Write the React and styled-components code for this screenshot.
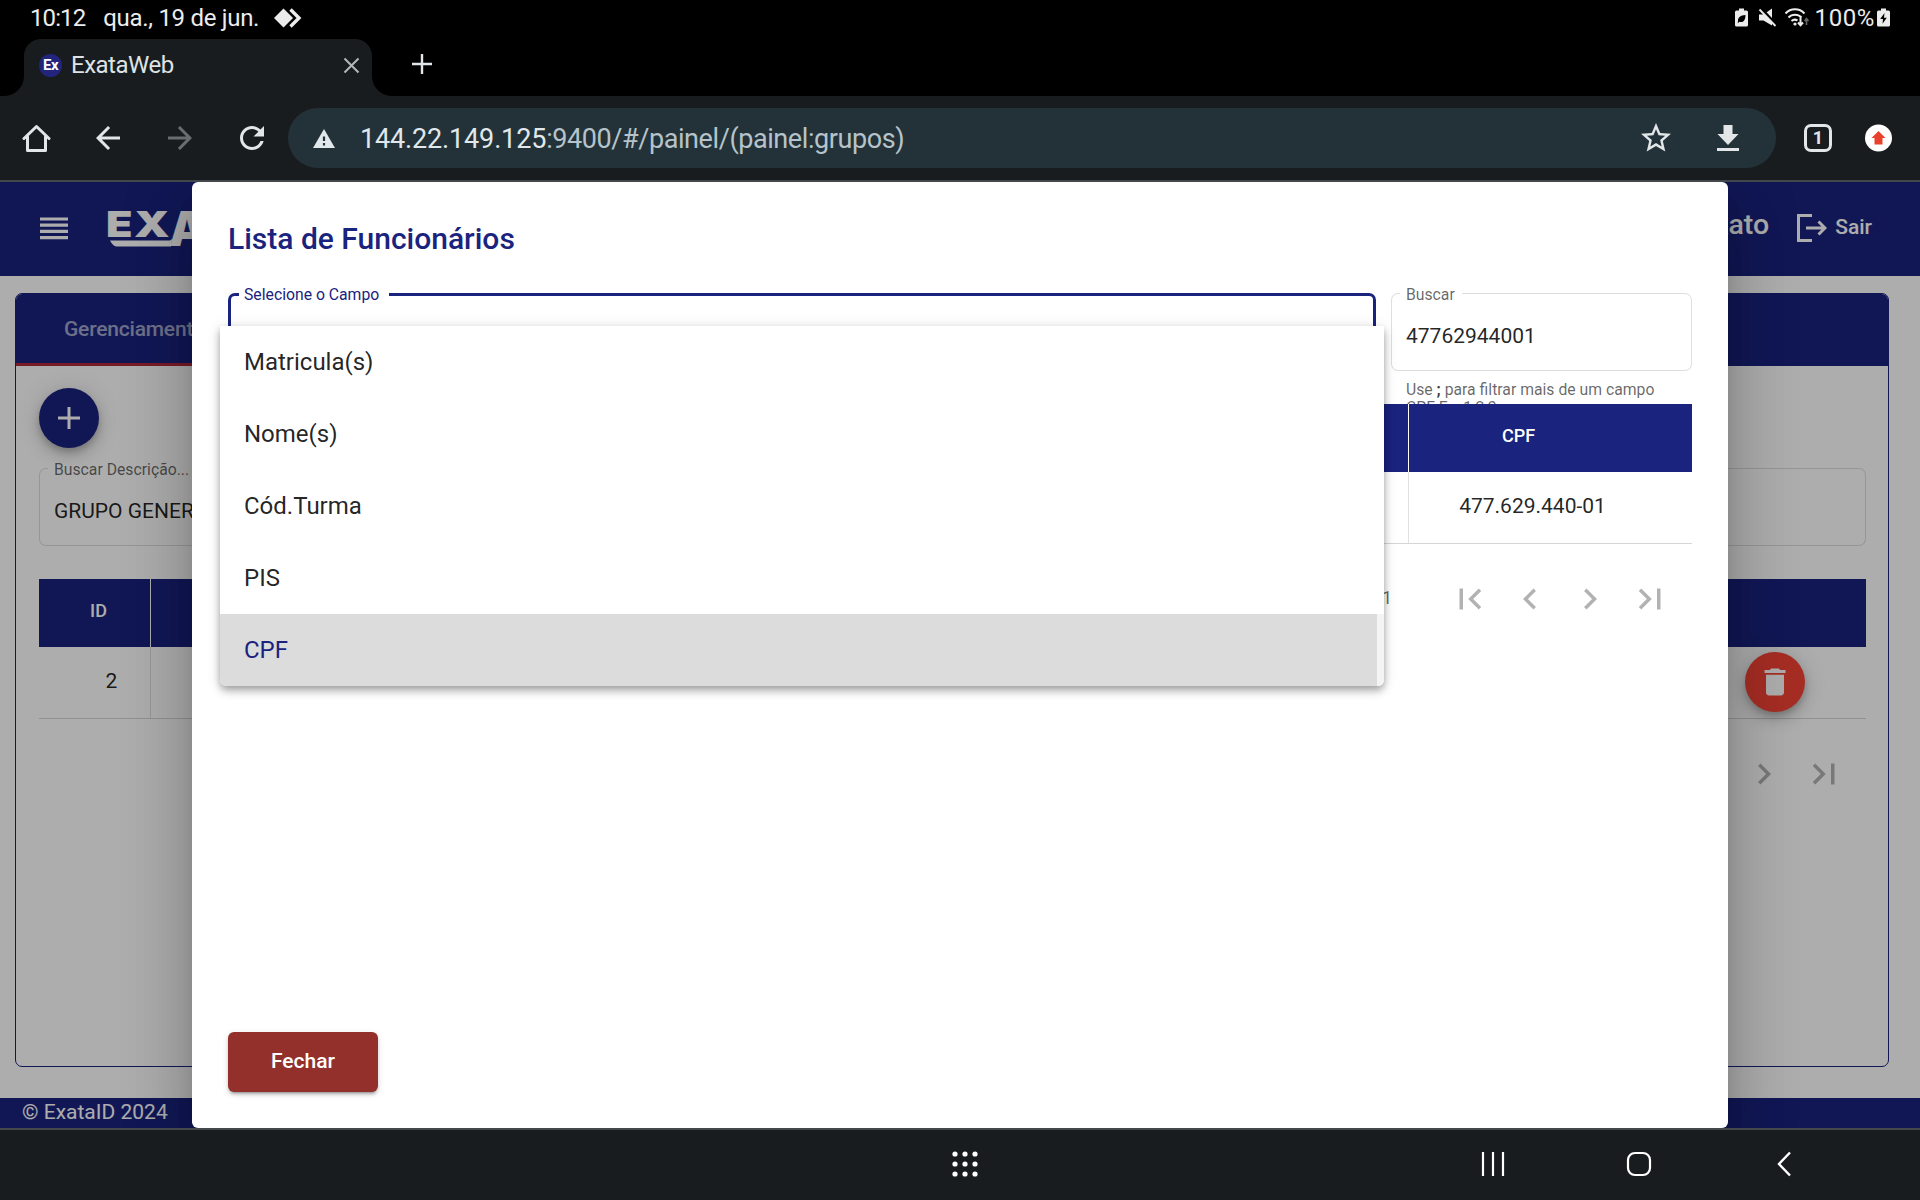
import React from "react";
import styled, { createGlobalStyle, css } from "styled-components";

const Global = createGlobalStyle`
  * { box-sizing: border-box; }
  body { margin: 0; background: #000; font-family: Roboto, "Liberation Sans", sans-serif; }
`;

const NAVY = "#1a237e";

const Screen = styled.div`
  width: 1920px;
  height: 1200px;
  display: flex;
  flex-direction: column;
  overflow: hidden;
  background: #000;
`;

const Row = styled.div`
  display: flex;
  align-items: center;
`;

const Txt = styled.span`
  display: block;
  white-space: pre;
  font-size: ${(p) => p.$size || 21}px;
  font-weight: ${(p) => p.$weight || 400};
  letter-spacing: ${(p) => p.$ls || 0}px;
  color: ${(p) => p.$color || "inherit"};
`;

/* ---------- system status bar ---------- */
const StatusBar = styled(Row)`
  height: 39px;
  flex: none;
  justify-content: space-between;
  padding: 0 30px 3px 30px;
  color: #ececec;
`;
const StatusLeft = styled(Row)`
  gap: 18px;
`;
const DiamondIcon = styled.svg`
  margin-left: -3px;
`;
const Battery = styled(Txt)`
  margin: 0 2px 0 4px;
`;

/* ---------- browser chrome ---------- */
const TabStrip = styled.div`
  height: 57px;
  flex: none;
  display: flex;
  align-items: stretch;
  padding-left: 24px;
`;
const BrowserTab = styled(Row)`
  position: relative;
  width: 348px;
  padding: 0 12px 5px 15px;
  border-radius: 17px 17px 0 0;
  background: #191c1e;
  color: #dfe3e6;
  &::before,
  &::after {
    content: "";
    position: absolute;
    bottom: 0;
    width: 20px;
    height: 20px;
  }
  &::before {
    left: -20px;
    background: radial-gradient(circle at 0 0, transparent 19.5px, #191c1e 20.5px);
  }
  &::after {
    right: -20px;
    background: radial-gradient(circle at 100% 0, transparent 19.5px, #191c1e 20.5px);
  }
`;
const Favicon = styled.span`
  width: 23px;
  height: 23px;
  border-radius: 50%;
  background: #23247c;
  color: #fff;
  font: 700 15px/23px Roboto, sans-serif;
  letter-spacing: -0.6px;
  text-align: center;
  margin-right: 9px;
`;
const TabClose = styled.svg`
  margin-left: auto;
`;
const NewTab = styled.svg`
  margin: 14px 0 0 39px;
`;

const Toolbar = styled(Row)`
  height: 84px;
  flex: none;
  background: #191c1e;
  color: #e2e6e9;
`;
const ToolSlot = styled.div`
  width: ${(p) => p.$w || 72}px;
  display: flex;
  justify-content: center;
  opacity: ${(p) => (p.$dim ? 0.4 : 1)};
`;
const Omnibox = styled(Row)`
  width: 1488px;
  height: 60px;
  border-radius: 30px;
  background: #233238;
  padding: 0 12px 0 24px;
`;
const Url = styled(Txt)`
  margin-left: 24px;
  padding-top: 2px;
  flex: 1;
  color: #b6c3ca;
  b {
    font-weight: 400;
    letter-spacing: -0.15px;
    color: #e1e8ec;
  }
`;
const TabCount = styled.span`
  width: 28px;
  height: 28px;
  border: 3px solid #e2e6e9;
  border-radius: 7px;
  font: 700 18px/22px Roboto, sans-serif;
  text-align: center;
`;
const UpdateBadge = styled.svg`
  margin-left: 5px;
`;

/* ---------- web page ---------- */
const Viewport = styled.div`
  position: relative;
  height: 950px;
  flex: none;
  border: solid #42474c;
  border-width: 2px 0;
  overflow: hidden;
  background: #fff;
`;
const Page = styled.div`
  height: 946px;
  display: flex;
  flex-direction: column;
  isolation: isolate;
`;
const AppHeader = styled(Row)`
  height: 94px;
  flex: none;
  padding: 0 48px 3px 40px;
  background: ${NAVY};
  color: #fff;
`;
const Logo = styled.div`
  display: flex;
  position: relative;
  margin: 3px 0 0 38px;
  height: 36px;
  font: 900 36px/36px Inter, sans-serif;
`;
const LogoText = styled.span`
  display: block;
  line-height: ${(p) => p.$lh || 26}px;
  font-size: ${(p) => p.$size || 36}px;
  transform-origin: 0 0;
  transform: scaleX(${(p) => p.$stretch});
  width: ${(p) => p.$w}px;
  white-space: nowrap;
`;
const LogoSwoosh = styled.svg`
  position: absolute;
  left: 0;
  top: 0;
`;
const HeaderUser = styled(Txt)`
  margin-left: auto;
  padding-bottom: 6px;
`;
const Exit = styled(Row)`
  margin-left: 28px;
  gap: 8px;
`;
const ExitLabel = styled(Txt)`
  padding-bottom: 2px;
`;
const Main = styled.main`
  flex: 1;
  padding: 17px 31px 31px 15px;
`;
const Card = styled.section`
  height: 774px;
  border: 1px solid ${NAVY};
  border-radius: 7px;
  overflow: hidden;
`;
const CardTabs = styled.div`
  height: 72px;
  display: flex;
  background: ${NAVY};
`;
const CardTab = styled.div`
  width: 420px;
  padding: 0 0 0 48px;
  border-bottom: 3px solid #b0283a;
  display: flex;
  align-items: center;
  color: rgba(255, 255, 255, 0.6);
`;
const CardBody = styled.div`
  padding: 22px 22px 0 23px;
`;
const Fab = styled.div`
  width: 60px;
  height: 60px;
  border-radius: 50%;
  background: ${(p) => p.$bg};
  display: flex;
  align-items: center;
  justify-content: center;
  flex: none;
  box-shadow: 0 4px 7px -1px rgba(0, 0, 0, 0.2), 0 8px 15px rgba(0, 0, 0, 0.14), 0 1px 26px rgba(0, 0, 0, 0.12);
`;

/* ---------- outlined field ---------- */
const fieldLine = css`
  ${(p) => p.$line || 1}px solid ${(p) => p.$color || "rgba(0,0,0,0.13)"}
`;
const FieldBox = styled.div`
  position: relative;
  display: flex;
  width: ${(p) => (p.$w ? p.$w + "px" : "100%")};
  height: 78px;
  flex: none;
  margin-top: ${(p) => p.$mt || 0}px;
`;
const FieldStart = styled.i`
  width: ${(p) => p.$start || 9}px;
  border: ${fieldLine};
  border-right: 0;
  border-radius: 7px 0 0 7px;
`;
const FieldNotch = styled.span`
  border-bottom: ${fieldLine};
  padding: 0 ${(p) => p.$gap || 7}px 0 ${(p) => p.$lead || 6}px;
`;
const FieldLabel = styled(Txt)`
  line-height: 20px;
  margin-top: -8px;
`;
const FieldEnd = styled.i`
  flex: 1;
  border: ${fieldLine};
  border-left: 0;
  border-radius: 0 7px 7px 0;
`;
const FieldValue = styled(Txt)`
  position: absolute;
  left: 15px;
  top: 30px;
  line-height: 26px;
  color: rgba(0, 0, 0, 0.87);
`;
const Field = ({ label, value, color, labelColor, line, start, gap, lead, children, ...box }) => (
  <FieldBox {...box}>
    <FieldStart $start={start} $line={line} $color={color} />
    <FieldNotch $line={line} $color={color} $gap={gap} $lead={lead}>
      <FieldLabel $size={15.75} $color={labelColor || "rgba(0,0,0,0.6)"}>{label}</FieldLabel>
    </FieldNotch>
    <FieldEnd $line={line} $color={color} />
    {value && <FieldValue>{value}</FieldValue>}
    {children}
  </FieldBox>
);

/* ---------- tables ---------- */
const Table = styled.div`
  position: relative;
  z-index: 1;
  margin-top: ${(p) => p.$mt || 0}px;
`;
const HeadRow = styled.div`
  display: flex;
  height: 68px;
  background: ${NAVY};
  color: #fff;
`;
const DataRow = styled.div`
  display: flex;
  height: 72px;
  border-bottom: 1px solid rgba(0, 0, 0, 0.16);
  color: rgba(0, 0, 0, 0.87);
`;
const Cell = styled.div`
  display: flex;
  align-items: center;
  justify-content: ${(p) => p.$justify || "flex-start"};
  ${(p) => (p.$w ? `width: ${p.$w}px; flex: none;` : "flex: 1;")}
  padding: ${(p) => p.$pad || "0"};
  border-right: ${(p) => (p.$rule ? `1px solid ${p.$rule}` : "0")};
`;
const Paginator = styled(Row)`
  justify-content: flex-end;
  margin-top: 25px;
  height: 60px;
  padding-right: 12px;
  color: rgba(0, 0, 0, 0.3);
`;
const PageButton = styled.span`
  width: 60px;
  display: flex;
  justify-content: center;
`;
const PageRange = styled(Txt)`
  margin-right: 48px;
  padding-bottom: 4px;
`;
const Footer = styled.footer`
  height: 30px;
  flex: none;
  padding-left: 22px;
  background: ${NAVY};
  color: #fff;
  line-height: 28px;
`;

/* ---------- dialog ---------- */
const Backdrop = styled.div`
  position: absolute;
  inset: 0;
  background: rgba(0, 0, 0, 0.32);
  display: flex;
  justify-content: center;
`;
const Dialog = styled.div`
  width: 1536px;
  height: 946px;
  padding: 36px;
  border-radius: 6px;
  background: #fff;
  display: flex;
  flex-direction: column;
  box-shadow: 0 16px 22px -10px rgba(0, 0, 0, 0.2), 0 36px 57px 4px rgba(0, 0, 0, 0.14), 0 14px 69px 12px rgba(0, 0, 0, 0.12);
`;
const DialogTitle = styled.h2`
  margin: 0 0 33px;
  height: 42px;
  font-size: 30px;
  font-weight: 500;
  line-height: 42px;
  color: ${NAVY};
`;
const Filters = styled.div`
  display: flex;
  gap: 15px;
  height: 111px;
  flex: none;
`;
const SearchColumn = styled.div`
  width: 301px;
`;
const Hint = styled.div`
  padding: 10px 0 0 15px;
  font-size: 15.75px;
  line-height: 18px;
  white-space: nowrap;
  color: rgba(0, 0, 0, 0.6);
  b { color: rgba(0, 0, 0, 0.8); }
`;
const Menu = styled.ul`
  position: absolute;
  z-index: 5;
  left: -8px;
  top: 33px;
  width: 1164px;
  margin: 0;
  padding: 0;
  list-style: none;
  border-radius: 0 0 6px 6px;
  overflow: hidden;
  background: #fff;
  box-shadow: 0 3px 7px -1px rgba(0, 0, 0, 0.25), 0 6px 8px rgba(0, 0, 0, 0.14), 0 2px 15px rgba(0, 0, 0, 0.12);
`;
const MenuItem = styled.li`
  height: 72px;
  padding-left: 24px;
  display: flex;
  align-items: center;
  font-size: 24px;
  color: ${(p) => (p.$active ? NAVY : "rgba(0,0,0,0.87)")};
  background: ${(p) => (p.$active ? "linear-gradient(90deg, #dcdcdc 1157px, #f4f4f4 1157px)" : "#fff")};
`;
const CloseButton = styled.button`
  margin-top: auto;
  width: 150px;
  height: 60px;
  border: 0;
  border-radius: 6px;
  padding: 0 0 2px;
  background: #93302c;
  color: #fff;
  font: 500 21px Roboto, sans-serif;
  box-shadow: 0 4px 2px -3px rgba(0, 0, 0, 0.25), 0 3px 3px rgba(0, 0, 0, 0.14), 0 2px 7px rgba(0, 0, 0, 0.12);
`;

/* ---------- system navigation ---------- */
const NavBar = styled.nav`
  height: 70px;
  flex: none;
  display: flex;
  align-items: center;
  padding: 0 120px 3px 951px;
  background: #191c1e;
`;
const NavRight = styled.div`
  margin-left: auto;
  display: flex;
  gap: 116px;
`;

const PAGE_ICONS = {
  first: "M18.41 16.59L13.82 12l4.59-4.59L17 6l-6 6 6 6zM6 6h2v12H6z",
  prev: "M15.41 7.41L14 6l-6 6 6 6 1.41-1.41L10.83 12z",
  next: "M10 6L8.59 7.41 13.17 12l-4.58 4.59L10 18l6-6z",
  last: "M5.59 7.41L10.18 12l-4.59 4.59L7 18l6-6-6-6zM16 6h2v12h-2z",
};
const PageIcons = () =>
  Object.entries(PAGE_ICONS).map(([name, d]) => (
    <PageButton key={name}>
      <svg width="42" height="42" viewBox="0 0 24 24" fill="currentColor"><path d={d} /></svg>
    </PageButton>
  ));

const Status = () => (
  <StatusBar>
    <StatusLeft>
      <Txt $size={24} $ls={-0.9}>10:12</Txt>
      <Txt $size={24} $ls={-0.3}>qua., 19 de jun.</Txt>
      <DiamondIcon width="28" height="20" viewBox="0 0 28 20">
        <path d="M9.5 .5 19 10 9.5 19.5 0 10Z" fill="#ececec" />
        <path d="M16.5 1.500 25 10 16.500 18.500" fill="none" stroke="#ececec" strokeWidth="3.4" />
      </DiamondIcon>
    </StatusLeft>
    <Row>
      <svg width="76" height="20" viewBox="0 0 76 20" fill="#ececec">
        <path d="M1.500 2.500H4V.5h5v2h2.500a1.500 1.500 0 0 1 1.500 1.500V17a1.500 1.500 0 0 1-1.500 1.500h-10A1.500 1.500 0 0 1 0 17V4a1.500 1.500 0 0 1 1.500-1.500Z" />
        <path d="M3 13c0-4 2.500-5.500 7.500-6 0 5.500-2.500 8-6 6.800l-1.800 1.400Z" fill="#000" />
        <path d="M24 6.500h4.500L37 .5v17L28.500 12.500H24Z" />
        <path d="M25.500 0 42 17.500" stroke="#000" strokeWidth="3" />
        <path d="M24.500 1.500 40.500 18" stroke="#ececec" strokeWidth="1.800" />
        <g fill="none" stroke="#ececec" strokeWidth="2">
          <path d="M50.500 5.500a13 13 0 0 1 19 0" />
          <path d="M53.500 9.500a9 9 0 0 1 13 0" />
          <path d="M56.500 13a5 5 0 0 1 6 -.5" />
          <path d="M65.500 9.500v7M63 14.500l2.500 2.700 2.500-2.700" />
        </g>
        <circle cx="60" cy="16" r="1.600" />
        <path d="M71.500 17v-6M69.500 13l2-2.500 2 2.500" stroke="#666" strokeWidth="1.600" fill="none" />
      </svg>
      <Battery $size={24} $ls={0.6}>100%</Battery>
      <svg width="13" height="20" viewBox="0 0 13 20">
        <path d="M1.500 2.500H4V.5h5v2h2.500A1.500 1.500 0 0 1 13 4v13a1.500 1.500 0 0 1-1.500 1.500h-10A1.500 1.500 0 0 1 0 17V4a1.500 1.500 0 0 1 1.500-1.500Z" fill="#ececec" />
        <path d="M7.500 5 3.200 11h2.800L5.500 15.800 9.800 9.800H7Z" fill="#000" />
      </svg>
    </Row>
  </StatusBar>
);

const Browser = () => (
  <>
    <TabStrip>
      <BrowserTab>
        <Favicon>Ex</Favicon>
        <Txt $size={24} $ls={-0.5}>ExataWeb</Txt>
        <TabClose width="17" height="17" viewBox="0 0 17 17"><path d="M1.500 1.500l14 14M15.500 1.500l-14 14" stroke="#b4b7ba" strokeWidth="2" /></TabClose>
      </BrowserTab>
      <NewTab width="22" height="22" viewBox="0 0 22 22"><path d="M11 1v20M1 11h20" stroke="#e2e6e9" strokeWidth="2.400" /></NewTab>
    </TabStrip>
    <Toolbar>
      <ToolSlot>
        <svg width="30" height="30" viewBox="0 0 30 30" fill="none" stroke="currentColor" strokeWidth="3" strokeLinejoin="round" strokeLinecap="round">
          <path d="M3 15.500 15.500 3.500 28 15.500M6.500 13.500V27.500h18V13.500" />
        </svg>
      </ToolSlot>
      <ToolSlot>
        <svg width="36" height="36" viewBox="0 0 24 24" fill="currentColor"><path d="M20 11H7.830l5.590-5.590L12 4l-8 8 8 8 1.410-1.410L7.830 13H20z" /></svg>
      </ToolSlot>
      <ToolSlot $dim>
        <svg width="36" height="36" viewBox="0 0 24 24" fill="currentColor"><path d="M12 4l-1.410 1.410L16.170 11H4v2h12.170l-5.580 5.590L12 20l8-8z" /></svg>
      </ToolSlot>
      <ToolSlot>
        <svg width="36" height="36" viewBox="0 0 24 24" fill="currentColor"><path d="M17.650 6.350C16.200 4.900 14.210 4 12 4c-4.420 0-7.990 3.580-7.990 8s3.570 8 7.990 8c3.730 0 6.840-2.550 7.730-6h-2.080c-.82 2.330-3.040 4-5.650 4-3.310 0-6-2.690-6-6s2.690-6 6-6c1.660 0 3.140.69 4.220 1.780L13 11h7V4z" /></svg>
      </ToolSlot>
      <Omnibox>
        <svg width="24" height="24" viewBox="0 0 24 24">
          <path d="M12 3 23 22H1Z" fill="#e1e8ec" />
          <path d="M12 10.500v4.500M12 17v2.400" stroke="#233238" strokeWidth="2.200" />
        </svg>
        <Url $size={27} $ls={-0.42}><b>144.22.149.125</b>:9400/#/painel/(painel:grupos)</Url>
        <ToolSlot>
          <svg width="36" height="36" viewBox="0 0 24 24" fill="currentColor"><path d="M22 9.240l-7.190-.62L12 2 9.190 8.630 2 9.240l5.460 4.730L5.820 21 12 17.270 18.180 21l-1.630-7.030L22 9.240zM12 15.400l-3.760 2.270 1-4.280-3.320-2.880 4.380-.38L12 6.100l1.710 4.040 4.380.38-3.320 2.880 1 4.280L12 15.400z" /></svg>
        </ToolSlot>
        <ToolSlot>
          <svg width="24" height="28" viewBox="0 0 24 28" fill="currentColor"><path d="M7.500 1h9v9h6L12 21 1.500 10h6ZM1 24h22v3H1Z" /></svg>
        </ToolSlot>
      </Omnibox>
      <ToolSlot $w={84}><TabCount>1</TabCount></ToolSlot>
      <UpdateBadge width="28" height="28" viewBox="0 0 28 28">
        <circle cx="13.500" cy="14" r="13.500" fill="#fff" />
        <path d="M13.500 7 20.500 14h-3v6.500h-8V14h-3Z" fill="#e8412c" />
      </UpdateBadge>
    </Toolbar>
  </>
);

const Background = () => (
  <Page>
    <AppHeader>
      <svg width="28" height="24" viewBox="0 0 28 24"><path d="M0 3h28M0 9.200h28M0 15.400h28M0 21.600h28" stroke="#fff" strokeWidth="3.200" /></svg>
      <Logo>
        <LogoText $stretch={1.2} $w={27.5}>E</LogoText>
        <LogoText $stretch={1.26} $w={35}>X</LogoText>
        <LogoText $size={48} $lh={36} $stretch={0.95} $w={90}>A</LogoText>
        <LogoSwoosh width="68" height="36" viewBox="0 0 68 36"><path d="M4 29.500h60L66 28 65 35.500H11Q7 35.500 4 29.500Z" fill="#fff" /></LogoSwoosh>
      </Logo>
      <HeaderUser $size={28.5} $weight={500}>Exato</HeaderUser>
      <Exit>
        <svg width="30" height="28" viewBox="0 0 30 28" fill="none" stroke="#fff" strokeWidth="3"><path d="M15 1.500H1.500v25H15M9 14h19M21.500 7.500 28 14l-6.500 6.500" /></svg>
        <ExitLabel $size={21} $weight={500}>Sair</ExitLabel>
      </Exit>
    </AppHeader>
    <Main>
      <Card>
        <CardTabs><CardTab><Txt $size={21} $weight={500} $ls={-0.2}>Gerenciamento de Grupos</Txt></CardTab></CardTabs>
        <CardBody>
          <Fab $bg={NAVY}>
            <svg width="22" height="22" viewBox="0 0 22 22"><path d="M11 0v22M0 11h22" stroke="#fff" strokeWidth="3" /></svg>
          </Fab>
          <Field $mt={20} label="Buscar Descrição..." value="GRUPO GENERICO" />
          <Table $mt={33}>
            <HeadRow>
              <Cell $w={112} $justify="center" $pad="0 0 6px 8px" $rule="#fff"><Txt $size={18} $weight={500}>ID</Txt></Cell>
              <Cell />
            </HeadRow>
            <DataRow>
              <Cell $w={112} $justify="center" $pad="0 0 4px 34px" $rule="rgba(0,0,0,0.12)"><Txt>2</Txt></Cell>
              <Cell $justify="flex-end" $pad="0 61px 2px 0">
                <Fab $bg="#f44336">
                  <svg width="36" height="36" viewBox="0 0 24 24" fill="#fff"><path d="M6 19c0 1.100.9 2 2 2h8c1.100 0 2-.9 2-2V7.200H6v11.800zM19 4h-3.500l-1-1h-5l-1 1H5v2h14V4z" /></svg>
                </Fab>
              </Cell>
            </DataRow>
          </Table>
          <Paginator><PageIcons /></Paginator>
        </CardBody>
      </Card>
    </Main>
    <Footer><Txt $size={21}>© ExataID 2024</Txt></Footer>
  </Page>
);

const OPTIONS = ["Matricula(s)", "Nome(s)", "Cód.Turma", "PIS", "CPF"];

const EmployeeDialog = () => (
  <Backdrop>
    <Dialog>
      <DialogTitle>Lista de Funcionários</DialogTitle>
      <Filters>
        <Field $w={1148} label="Selecione o Campo" color={NAVY} labelColor={NAVY} line={3} start={11} lead={5} gap={10}>
          <Menu>
            {OPTIONS.map((name) => <MenuItem key={name} $active={name === "CPF"}>{name}</MenuItem>)}
          </Menu>
        </Field>
        <SearchColumn>
          <Field label="Buscar" value="47762944001" />
          <Hint>Use <b>;</b> para filtrar mais de um campo<br />CPF Ex: 1;2;3</Hint>
        </SearchColumn>
      </Filters>
      <Table>
        <HeadRow>
          <Cell $w={1181} $rule="#fff" />
          <Cell $justify="center" $pad="0 64px 6px 0"><Txt $size={18} $weight={500}>CPF</Txt></Cell>
        </HeadRow>
        <DataRow>
          <Cell $w={1181} $rule="rgba(0,0,0,0.12)" />
          <Cell $justify="center" $pad="0 36px 4px 0"><Txt>477.629.440-01</Txt></Cell>
        </DataRow>
      </Table>
      <Paginator>
        <PageRange $size={18} $color="rgba(0,0,0,0.6)">1 – 1 de 1</PageRange>
        <PageIcons />
      </Paginator>
      <CloseButton>Fechar</CloseButton>
    </Dialog>
  </Backdrop>
);

const Dots = () => (
  <svg width="28" height="28" viewBox="0 0 28 28" fill="#fff">
    {[4, 14, 24].flatMap((x) => [4, 14, 24].map((y) => <circle key={`${x}-${y}`} cx={x} cy={y} r="2.600" />))}
  </svg>
);

export default function App() {
  return (
    <Screen>
      <Global />
      <Status />
      <Browser />
      <Viewport>
        <Background />
        <EmployeeDialog />
      </Viewport>
      <NavBar>
        <Dots />
        <NavRight>
          <svg width="30" height="28" viewBox="0 0 30 28" stroke="#fff" strokeWidth="2.200"><path d="M5 2v24M15 2v24M25 2v24" /></svg>
          <svg width="30" height="28" viewBox="0 0 30 28" fill="none" stroke="#fff" strokeWidth="2.200"><rect x="4" y="3" width="22" height="22" rx="7" /></svg>
          <svg width="30" height="28" viewBox="0 0 30 28" fill="none" stroke="#fff" strokeWidth="2.400"><path d="M20 2.500 9 14 20 25.500" /></svg>
        </NavRight>
      </NavBar>
    </Screen>
  );
}
